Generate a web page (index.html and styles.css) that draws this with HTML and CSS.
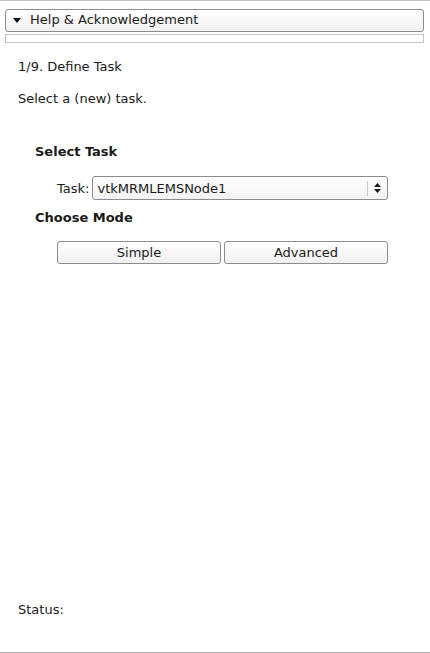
FILE: index.html
```html
<!DOCTYPE html>
<html>
<head>
<meta charset="utf-8">
<link rel="stylesheet" href="styles.css">
</head>
<body>
<div class="page">
  <div class="help-wrap">
    <div class="help-btn"><span class="arrow"></span><span class="help-label">Help &amp; Acknowledgement</span></div>
    <div class="help-body"></div>
  </div>
  <div class="step">1/9. Define Task</div>
  <div class="desc">Select a (new) task.</div>
  <div class="section">
    <div class="sec-title">Select Task</div>
    <div class="task-row">
      <span class="task-label">Task:</span>
      <div class="combo">
        <span class="combo-text">vtkMRMLEMSNode1</span>
        <span class="combo-sep"></span>
        <svg class="combo-arrows" width="7" height="10" viewBox="0 0 7 10"><path d="M3.5 0 L7 4 L0 4 Z M0 6 L7 6 L3.5 10 Z" fill="#1a1a1a"/></svg>
      </div>
    </div>
    <div class="sec-title mode-title">Choose Mode</div>
    <div class="mode-row">
      <div class="btn">Simple</div>
      <div class="btn">Advanced</div>
    </div>
  </div>
  <div class="spacer"></div>
  <div class="status">Status:</div>
</div>
</body>
</html>
```
FILE: styles.css
```css
html, body {
  margin: 0;
  padding: 0;
  background: #ffffff;
}
body {
  font-family: "DejaVu Sans", sans-serif;
  font-size: 13px;
  color: #1a1a1a;
}
.page {
  width: 430px;
  height: 653px;
  box-sizing: border-box;
  border-top: 1px solid #c4c4c4;
  border-bottom: 1px solid #b8b8b8;
  display: flex;
  flex-direction: column;
}
.help-wrap {
  padding: 8px 6px 0 5px;
}
.help-btn {
  height: 21px;
  border: 1px solid #8c8c8c;
  border-radius: 3px;
  background: linear-gradient(#ffffff, #f0f0f0);
  display: flex;
  align-items: center;
  padding-left: 7px;
}
.arrow {
  width: 0;
  height: 0;
  border-left: 4px solid transparent;
  border-right: 4px solid transparent;
  border-top: 5px solid #111;
  margin-right: 9px;
}
.help-label {
  line-height: 16px;
  margin-top: -1px;
}
.help-body {
  margin-top: 2px;
  height: 7px;
  border: 1px solid #c2c2c2;
}
.step {
  margin: 16px 0 0 18px;
  line-height: 16px;
}
.desc {
  margin: 16px 0 0 18px;
  line-height: 16px;
}
.section {
  margin: 37px 0 0 35px;
  width: 353px;
}
.sec-title {
  font-weight: bold;
  line-height: 16px;
}
.task-row {
  display: flex;
  align-items: center;
  margin: 16px 0 0 22px;
}
.task-label {
  margin-right: 3px;
}
.combo {
  flex: 1;
  height: 24px;
  box-sizing: border-box;
  border: 1px solid #8c8c8c;
  border-radius: 3px;
  background: linear-gradient(#ffffff, #f2f2f2);
  display: flex;
  align-items: center;
  padding-left: 4px;
}
.combo-text {
  flex: 1;
}
.combo-sep {
  width: 1px;
  height: 15px;
  background: #c8c8c8;
  margin-right: 6px;
}
.combo-arrows {
  margin-right: 6px;
}
.mode-title {
  margin-top: 10px;
}
.mode-row {
  display: flex;
  gap: 3px;
  margin: 15px 0 0 22px;
}
.btn {
  flex: 1;
  height: 23px;
  box-sizing: border-box;
  border: 1px solid #8c8c8c;
  border-radius: 3px;
  background: linear-gradient(#ffffff, #f0f0f0);
  display: flex;
  align-items: center;
  justify-content: center;
}
.spacer {
  flex: 1;
}
.status {
  margin: 0 0 34px 18px;
  line-height: 16px;
}
```
